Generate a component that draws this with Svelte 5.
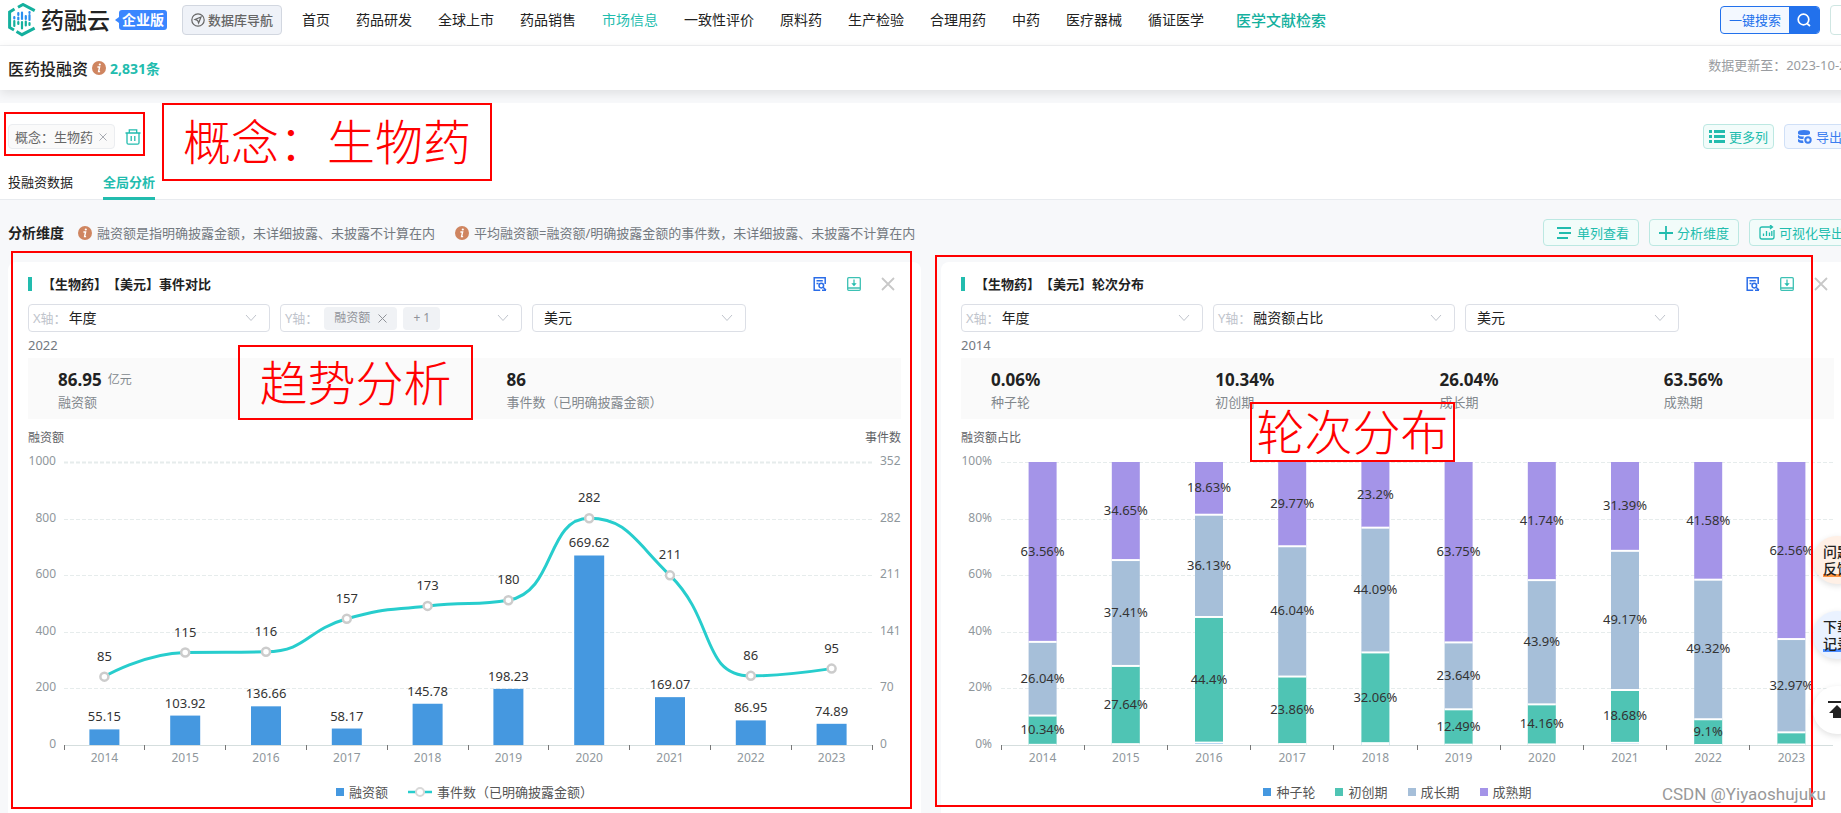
<script lang="ts">
  type Point = { x: number; y: number };

  const NAV = [
    "首页", "药品研发", "全球上市", "药品销售", "市场信息", "一致性评价", "原料药",
    "生产检验", "合理用药", "中药", "医疗器械", "循证医学",
  ];
  const YEARS = [2014, 2015, 2016, 2017, 2018, 2019, 2020, 2021, 2022, 2023];
  const AMOUNTS = [55.15, 103.92, 136.66, 58.17, 145.78, 198.23, 669.62, 169.07, 86.95, 74.89];
  const EVENTS = [85, 115, 116, 157, 173, 180, 282, 211, 86, 95];

  const ROUNDS = [
    { name: "种子轮", color: "#4598e0", values: [0.06, 0.3, 0.84, 0.33, 0.65, 0.12, 0.2, 0.76, 0, 0.17] },
    { name: "初创期", color: "#4fc4b4", values: [10.34, 27.64, 44.4, 23.86, 32.06, 12.49, 14.16, 18.68, 9.1, 4.3] },
    { name: "成长期", color: "#a6bfd9", values: [26.04, 37.41, 36.13, 46.04, 44.09, 23.64, 43.9, 49.17, 49.32, 32.97] },
    { name: "成熟期", color: "#a494e8", values: [63.56, 34.65, 18.63, 29.77, 23.2, 63.75, 41.74, 31.39, 41.58, 62.56] },
  ];

  const TREND_STATS = [
    { value: "86.95", unit: "亿元", label: "融资额" },
    { value: "86", unit: "", label: "事件数（已明确披露金额）" },
  ];
  const ROUND_STATS = [
    { value: "0.06%", unit: "", label: "种子轮" },
    { value: "10.34%", unit: "", label: "初创期" },
    { value: "26.04%", unit: "", label: "成长期" },
    { value: "63.56%", unit: "", label: "成熟期" },
  ];

  // vertical extent shared by both plots
  const TOP = 16;
  const BOTTOM = 299;
  const SPAN = BOTTOM - TOP;

  let trendWidth = $state(873);
  let roundWidth = $state(873);

  const trend = $derived({ left: 36, right: trendWidth - 29, band: (trendWidth - 65) / 10 });
  const round = $derived({ left: 40, right: roundWidth - 1, band: (roundWidth - 41) / 10 });

  const points = $derived(
    EVENTS.map((v, i) => ({ x: trend.left + trend.band * (i + 0.5), y: BOTTOM - (v / 352) * SPAN })),
  );

  const clamp = (v: number, a: number, b: number) =>
    Math.max(Math.min(v, Math.max(a, b)), Math.min(a, b));

  function smoothPath(pts: Point[]) {
    let d = `M${pts[0].x},${pts[0].y}`;
    let c0 = pts[0];
    for (let i = 1; i < pts.length; i++) {
      const prev = pts[i - 1];
      const cur = pts[i];
      const next = pts[i + 1];
      let c1 = cur;
      let nextC0 = cur;
      if (next) {
        const lp = Math.hypot(cur.x - prev.x, cur.y - prev.y);
        const ln = Math.hypot(next.x - cur.x, next.y - cur.y);
        const r = (0.5 * ln) / (ln + lp);
        const nx = clamp(cur.x + (next.x - prev.x) * r, cur.x, next.x);
        const ny = clamp(cur.y + (next.y - prev.y) * r, cur.y, next.y);
        c1 = {
          x: clamp(cur.x - ((nx - cur.x) * lp) / ln, prev.x, cur.x),
          y: clamp(cur.y - ((ny - cur.y) * lp) / ln, prev.y, cur.y),
        };
        nextC0 = {
          x: cur.x + ((cur.x - c1.x) * ln) / lp,
          y: cur.y + ((cur.y - c1.y) * ln) / lp,
        };
      }
      d += `C${c0.x},${c0.y} ${c1.x},${c1.y} ${cur.x},${cur.y}`;
      c0 = nextC0;
    }
    return d;
  }

  function stack(i: number) {
    let base = 0;
    return ROUNDS.map((r, k) => {
      const v = r.values[i];
      const top = k === 3 ? 100 : base + v;
      const seg = {
        name: r.name,
        color: r.color,
        label: v > 5 ? `${v}%` : "",
        y: BOTTOM - (top / 100) * SPAN,
        h: ((top - base) / 100) * SPAN,
      };
      base = top;
      return seg;
    });
  }
</script>

{#snippet info()}
  <svg class="info" width="14" height="14" viewBox="0 0 14 14" aria-hidden="true">
    <circle cx="7" cy="7" r="7" fill="#cf8560" />
    <circle cx="7.8" cy="3.5" r="1.1" fill="#fff" />
    <path d="M5.4 6h2.2l-1 4.6h1.5" fill="none" stroke="#fff" stroke-width="1.4" />
  </svg>
{/snippet}

{#snippet chevron()}
  <svg class="chevron" width="12" height="8" viewBox="0 0 12 8" aria-hidden="true">
    <path d="M1 1l5 5.5L11 1" fill="none" stroke="#c0c4cc" stroke-width="1" />
  </svg>
{/snippet}

{#snippet cardHead(title: string)}
  <header class="card-head">
    <h2>{title}</h2>
    <button aria-label="查看数据">
      <svg width="14" height="14" viewBox="0 0 14 14" fill="none" stroke="#2b6de8" stroke-width="1.5">
        <path d="M12.2 7V.8H1.2v12.4h6M3.5 3.7h6.3M3.5 6.4h2" />
        <circle cx="8.3" cy="8.6" r="2.3" />
        <path d="M10 10.3l3 2.7M9 13.2h4" />
      </svg>
    </button>
    <button aria-label="下载">
      <svg width="14" height="14" viewBox="0 0 14 14" fill="none" stroke="#3cc1b4" stroke-width="1.3">
        <rect x=".7" y=".7" width="12.6" height="12.6" rx="1" />
        <path d="M1 11h12M7 2.5V8" />
        <path d="M4.3 6.2h5.4L7 9.2z" fill="#22bcae" stroke="none" />
      </svg>
    </button>
    <button aria-label="关闭">
      <svg width="14" height="14" viewBox="0 0 14 14" fill="none" stroke="#c8c8c8" stroke-width="1.8">
        <path d="M1 1l12 12M13 1L1 13" />
      </svg>
    </button>
  </header>
{/snippet}

{#snippet stats(items: { value: string; unit: string; label: string }[])}
  <dl class="stats">
    {#each items as s (s.label)}
      <div>
        <dd><strong>{s.value}</strong>{#if s.unit}<small>{s.unit}</small>{/if}</dd>
        <dt>{s.label}</dt>
      </div>
    {/each}
  </dl>
{/snippet}

<div class="page">
  <header class="topbar">
    <a class="brand" href="#home">
      <svg width="28" height="34" viewBox="0 0 28 34" fill="none" aria-hidden="true">
        <path d="M10 4.2l5-2.7 11.7 6.2M6.5 6L1.6 9v15.500L6 27M8.500 28.500l5.500 3.200 12.600-6.500" stroke="#14b09e" stroke-width="3" />
        <path d="M6.300 14v1.500M10.300 10v2M10.300 14.500v2M14 9.500V16M17.800 13v3M21.500 9v1M21.500 12v5" stroke="#2a8ff0" stroke-width="2.200" stroke-linecap="round" />
        <path d="M6.300 18v5M10.300 19v2M14 19v6.500M17.800 18.500v4M21.500 20v2" stroke="#14b09e" stroke-width="2.200" stroke-linecap="round" />
      </svg>
      <span class="brand-name">药融云</span>
      <span class="edition">企业版</span>
    </a>
    <button class="db-nav">
      <svg width="14" height="14" viewBox="0 0 14 14" fill="none" stroke="#666" aria-hidden="true">
        <circle cx="7" cy="7" r="6.2" stroke-width="1.2" />
        <path d="M10 4L4 6.4l2.6 1 1 2.6z" stroke-width="1.2" />
      </svg>
      数据库导航
    </button>
    <nav>
      {#each NAV as item (item)}
        <a href="#nav" class:active={item === "市场信息"}>{item}</a>
      {/each}
    </nav>
    <a class="literature" href="#literature">医学文献检索</a>
    <button class="search">
      <span>一键搜索</span>
      <svg width="30" height="28" viewBox="0 0 30 28" fill="none" stroke="#fff" stroke-width="1.7" aria-hidden="true">
        <circle cx="14.5" cy="13.5" r="5.3" />
        <path d="M18 17.5l3 2.5" />
      </svg>
    </button>
    <button class="account" aria-label="账户"></button>
  </header>

  <div class="titlebar">
    <h1>医药投融资</h1>
    {@render info()}
    <span class="count">2,831条</span>
    <span class="updated">数据更新至：2023-10-26</span>
  </div>

  <section class="filters">
    <div class="filter-row">
      <span class="filter-tag">概念：生物药 <button aria-label="移除">
        <svg width="8" height="8" viewBox="0 0 8 8" stroke="#a8abb2"><path d="M.5.5l7 7M7.5.5l-7 7" /></svg>
      </button></span>
      <button class="clear" aria-label="清空">
        <svg width="16" height="16" viewBox="0 0 16 16" fill="none" stroke="#22bcae" stroke-width="1.3">
          <path d="M.5 4h15M4.3 4V.8h7.4V4M2 4v9.7q0 1.5 1.5 1.5h9q1.5 0 1.5-1.5V4M6.2 7v5M9.8 7v5" />
        </svg>
      </button>
      <button class="action more">
        <svg width="16" height="15" viewBox="0 0 16 15" fill="#22bcae" aria-hidden="true">
          <path d="M0 1h3v3H0zM0 6h3v3H0zM0 11h3v3H0zM5 1h11v3H5zM5 6h11v3H5zM5 11h11v3H5z" />
        </svg>
        更多列
      </button>
      <button class="action export">
        <svg width="15" height="15" viewBox="0 0 15 15" aria-hidden="true">
          <path d="M1 3q0-2 6-2t6 2v1.500q0 1.500-6 1.500T1 4.500zM1 6q2 2 6 1.500-1 2-.5 2.500Q2 10 1 8.500zM1 10q2 1.500 5 1.500l.5 2.500Q2 14 1 12.500z" fill="#3a7df0" />
          <circle cx="11" cy="11" r="2.700" fill="none" stroke="#3a7df0" stroke-width="2" />
        </svg>
        导出
      </button>
    </div>
    <div class="tabs">
      <button>投融资数据</button>
      <button class="active">全局分析</button>
    </div>
  </section>

  <div class="analysis-bar">
    <strong>分析维度</strong>
    <span class="note">{@render info()}融资额是指明确披露金额，未详细披露、未披露不计算在内</span>
    <span class="note">{@render info()}平均融资额=融资额/明确披露金额的事件数，未详细披露、未披露不计算在内</span>
    <div class="actions">
      <button class="action single">
        <svg width="14" height="14" viewBox="0 0 14 14" stroke="#22bcae" stroke-width="1.800" aria-hidden="true">
          <path d="M0 2h14M2 7h12M0 12h11" />
        </svg>
        单列查看
      </button>
      <button class="action">
        <svg width="14" height="14" viewBox="0 0 14 14" stroke="#22bcae" stroke-width="1.800" aria-hidden="true">
          <path d="M0 7h14M7 0v14" />
        </svg>
        分析维度
      </button>
      <button class="action">
        <svg width="16" height="15" viewBox="0 0 16 15" fill="none" stroke="#22bcae" stroke-width="1.300" aria-hidden="true">
          <path d="M9 2H3Q1 2 1 4v8q0 2 2 2h10q2 0 2-2V5M7 2h6M11 0l2.500 2L11 4M4.500 11V8.500M7.500 11V6M10.500 11V7.500M12.800 11V6" />
        </svg>
        可视化导出
      </button>
    </div>
  </div>

  <main>
    <article class="card">
      {@render cardHead("【生物药】【美元】事件对比")}
      <div class="selects">
        <label class="field"><span>X轴：</span><select><option>年度</option></select>{@render chevron()}</label>
        <div class="field">
          <label for="trend-y">Y轴：</label>
          <span class="chip">融资额 <button aria-label="移除融资额">
            <svg width="9" height="9" viewBox="0 0 9 9" stroke="#909399"><path d="M.5.5l8 8M8.500.5l-8 8" /></svg>
          </button></span>
          <span class="chip">+ 1</span>
          <select id="trend-y"><option></option></select>
          {@render chevron()}
        </div>
        <label class="field currency"><select aria-label="币种"><option>美元</option></select>{@render chevron()}</label>
      </div>
      <p class="year">2022</p>
      {@render stats(TREND_STATS)}
      <div class="axis-titles"><span>融资额</span><span>事件数</span></div>
      <div class="chart" bind:clientWidth={trendWidth}>
        <svg width={trendWidth} height="322" role="img" aria-label="事件对比">
          {#each [0, 1, 2, 3, 4, 5] as k (k)}
            {@const y = Math.round(BOTTOM - (SPAN * k) / 5)}
            {#if k > 0}
              <line class="grid" class:strong={k === 5} x1={trend.left} x2={trend.right} y1={y + 0.5} y2={y + 0.5} />
            {/if}
            <text class="tick" x="28" y={y - 2} text-anchor="end">{k * 200}</text>
            <text class="tick" x={trend.right + 8} y={y - 2}>{[0, 70, 141, 211, 282, 352][k]}</text>
          {/each}
          {#each YEARS as year, i (year)}
            {@const h = (AMOUNTS[i] / 1000) * SPAN}
            <rect x={points[i].x - 15} y={BOTTOM - h} width="30" height={h} fill="#4598e0" />
            <text class="tick" x={points[i].x} y="311" text-anchor="middle">{year}</text>
          {/each}
          <line class="axis" x1={trend.left} x2={trend.right} y1={BOTTOM + 0.5} y2={BOTTOM + 0.5} />
          {#each [...YEARS, 2024] as year, i (year)}
            {@const x = Math.floor(trend.left + trend.band * i) + 0.5}
            <line class="mark" x1={x} x2={x} y1={BOTTOM} y2={BOTTOM + 5} />
          {/each}
          <path d={smoothPath(points)} fill="none" stroke="#27cdcd" stroke-width="3" />
          {#each points as p, i (i)}
            <circle cx={p.x} cy={p.y} r="4" fill="#fff" stroke="#ccc" stroke-width="2.500" />
            <text class="value" x={p.x} y={p.y - 21} text-anchor="middle">{EVENTS[i]}</text>
            <text class="value" x={p.x} y={BOTTOM - (AMOUNTS[i] / 1000) * SPAN - 13} text-anchor="middle">{AMOUNTS[i]}</text>
          {/each}
        </svg>
      </div>
      <ul class="legend">
        <li>
          <svg width="8" height="8"><rect width="8" height="8" fill="#4598e0" /></svg>
          融资额
        </li>
        <li>
          <svg width="24" height="12">
            <path d="M0 6h24" stroke="#27cdcd" stroke-width="2.500" />
            <circle cx="12" cy="6" r="4" fill="#fff" stroke="#d8d8d8" stroke-width="2" />
          </svg>
          事件数（已明确披露金额）
        </li>
      </ul>
    </article>

    <article class="card">
      {@render cardHead("【生物药】【美元】轮次分布")}
      <div class="selects">
        <label class="field"><span>X轴：</span><select><option>年度</option></select>{@render chevron()}</label>
        <label class="field"><span>Y轴：</span><select><option>融资额占比</option></select>{@render chevron()}</label>
        <label class="field currency"><select aria-label="币种"><option>美元</option></select>{@render chevron()}</label>
      </div>
      <p class="year">2014</p>
      {@render stats(ROUND_STATS)}
      <div class="axis-titles"><span>融资额占比</span></div>
      <div class="chart" bind:clientWidth={roundWidth}>
        <svg width={roundWidth} height="322" role="img" aria-label="轮次分布">
          {#each [0, 1, 2, 3, 4, 5] as k (k)}
            {@const y = Math.round(BOTTOM - (SPAN * k) / 5)}
            {#if k > 0}
              <line class="grid" x1={round.left} x2={round.right} y1={y + 0.5} y2={y + 0.5} />
            {/if}
            <text class="tick" x="31" y={y - 2} text-anchor="end">{k * 20}%</text>
          {/each}
          {#each YEARS as year, i (year)}
            {@const x = round.left + round.band * (i + 0.5)}
            {#each stack(i) as seg (seg.name)}
              <rect x={x - 14} y={seg.y} width="28" height={seg.h} fill={seg.color} />
              <path d="M{x - 14} {seg.y + seg.h}h28" stroke="#fff" stroke-width="2" />
            {/each}
            {#each stack(i) as seg (seg.name)}
              <text class="value" {x} y={seg.y + seg.h / 2 - 1} text-anchor="middle">{seg.label}</text>
            {/each}
            <text class="tick" {x} y="311" text-anchor="middle">{year}</text>
          {/each}
          <line class="axis" x1={round.left} x2={round.right} y1={BOTTOM + 0.5} y2={BOTTOM + 0.5} />
          {#each YEARS as year, i (year)}
            {@const x = Math.floor(round.left + round.band * i) + 0.5}
            <line class="mark" x1={x} x2={x} y1={BOTTOM} y2={BOTTOM + 5} />
          {/each}
        </svg>
      </div>
      <ul class="legend">
        {#each ROUNDS as r (r.name)}
          <li>
            <svg width="8" height="8"><rect width="8" height="8" fill={r.color} /></svg>
            {r.name}
          </li>
        {/each}
      </ul>
    </article>
  </main>

  <div class="outline tag-box"></div>
  <div class="outline concept-box">概念：生物药</div>
  <div class="outline trend-area"></div>
  <div class="outline trend-box">趋势分析</div>
  <div class="outline round-area"></div>
  <div class="outline round-box">轮次分布</div>

  <aside class="floating">
    <button class="feedback"><span>问题</span><span>反馈</span></button>
    <button class="downloads"><span>下载</span><span>记录</span></button>
    <button class="to-top" aria-label="回到顶部">
      <svg width="20" height="20" viewBox="0 0 20 20" fill="#222"><path d="M1 1h18v2H1zM10 5l8 8h-4v5H6v-5H2z" /></svg>
    </button>
  </aside>
  <span class="watermark">CSDN @Yiyaoshujuku</span>
</div>

<style>
  :global(body) {
    overflow: hidden;
  }

  .page {
    position: relative;
    box-sizing: border-box;
    /* the content runs slightly wider than the window */
    width: calc(100% + 21px);
    height: 100vh;
    overflow: hidden;
    background: #f7f8fa;
    color: #222;
    font-family: "Noto Sans", "Noto Sans CJK SC", sans-serif;
    font-size: 13px;
    line-height: 16px;
    text-spacing-trim: space-all;
  }

  button,
  select {
    padding: 0;
    border: 0;
    background: none;
    color: inherit;
    font: inherit;
  }

  svg {
    display: block;
    flex: none;
  }

  a {
    color: inherit;
    text-decoration: none;
  }

  h1,
  h2,
  p,
  dl,
  dd,
  ul {
    margin: 0;
    padding: 0;
  }

  .topbar {
    display: flex;
    align-items: center;
    box-sizing: border-box;
    height: 46px;
    padding: 0 8px 5px;
    border-bottom: 1px solid #f0f1f3;
    background: #fff;
    font-size: 14px;
    white-space: nowrap;
  }

  .brand {
    display: flex;
    align-items: center;
  }

  .brand-name {
    margin: 0 9px 0 5px;
    font-size: 23px;
    font-weight: 500;
    line-height: 30px;
  }

  .edition {
    position: relative;
    padding: 0 3px;
    border-radius: 3px;
    background: #3a86ff;
    color: #fff;
    font-weight: 700;
    line-height: 20px;
  }

  .edition::before {
    content: "";
    position: absolute;
    top: 7px;
    left: -4px;
    border: 3px solid transparent;
    border-right: 4px solid #3a86ff;
    border-left: 0;
  }

  .db-nav {
    display: flex;
    align-items: center;
    justify-content: center;
    gap: 3px;
    box-sizing: border-box;
    width: 100px;
    height: 30px;
    margin: 0 20px 0 15px;
    border: 1px solid #d2d7e0;
    border-radius: 4px;
    background: #eff2f8;
    color: #666;
    font-size: 13px;
    font-weight: 500;
  }

  nav {
    display: flex;
    gap: 26px;
  }

  nav .active {
    color: #22bcae;
  }

  .literature {
    margin-left: 32px;
    color: #14b09e;
    font-size: 15px;
    font-weight: 500;
  }

  .search {
    display: flex;
    align-items: center;
    box-sizing: border-box;
    height: 28px;
    margin-left: auto;
    overflow: hidden;
    border: 1px solid #2271ec;
    border-radius: 4px;
    background: #f3f8ff;
    color: #2271ec;
    font-size: 13px;
  }

  .search span {
    padding: 0 8px;
  }

  .search svg {
    background: #2271ec;
  }

  .account {
    box-sizing: border-box;
    width: 24px;
    height: 30px;
    margin-left: 10px;
    border: 1px solid #cfe6e2;
    border-radius: 4px;
  }

  .titlebar {
    position: relative;
    display: flex;
    align-items: flex-start;
    box-sizing: border-box;
    height: 44px;
    padding: 11px 8px 0;
    background: #fff;
    box-shadow: 0 3px 10px rgba(0, 0, 0, 0.1);
  }

  .titlebar h1 {
    font-size: 16px;
    font-weight: 500;
    line-height: 24px;
  }

  .titlebar .info {
    margin: 4px 4px 0;
  }

  .count {
    color: #22bcae;
    font-size: 14px;
    font-weight: 700;
    line-height: 24px;
  }

  .updated {
    margin-left: auto;
    color: #999ca0;
  }

  .filters {
    margin-top: 13px;
    padding: 21px 8px 0;
    background: #fff;
    box-shadow: inset 0 -1px #e8ebef;
  }

  .filter-row {
    display: flex;
    align-items: center;
    gap: 10px;
    height: 25px;
  }

  .filter-tag {
    display: flex;
    align-items: center;
    gap: 2px;
    box-sizing: border-box;
    width: 107px;
    height: 25px;
    padding: 0 6px;
    border: 1px solid #ebedf0;
    border-radius: 4px;
    background: #fafafa;
    color: #666;
    white-space: nowrap;
  }

  .filter-tag button {
    padding: 4px;
  }

  .action {
    display: flex;
    align-items: center;
    gap: 4px;
    box-sizing: border-box;
    height: 27px;
    padding: 0 9px;
    border: 1px solid #bce8e2;
    border-radius: 4px;
    background: #f2fcfa;
    color: #22bcae;
    white-space: nowrap;
  }

  .filter-row .action {
    height: 25px;
  }

  .more {
    margin-left: auto;
    padding: 0 5px;
  }

  .export {
    width: 70px;
    padding: 0 12px;
    border-color: #d0e0f7;
    background: #f2f7ff;
    color: #3a7df0;
  }

  .single {
    padding: 0 9px 0 13px;
    gap: 6px;
  }

  .tabs {
    display: flex;
    gap: 30px;
    margin-top: 18px;
  }

  .tabs button {
    border-bottom: 3px solid transparent;
    line-height: 30px;
  }

  .tabs .active {
    border-color: #22bcae;
    color: #22bcae;
    font-weight: 700;
  }

  .analysis-bar {
    display: flex;
    align-items: center;
    padding: 19px 8px 16px;
    white-space: nowrap;
  }

  .analysis-bar strong {
    margin-right: 14px;
    font-size: 14px;
  }

  .note {
    display: flex;
    align-items: center;
    gap: 5px;
    margin-right: 20px;
    color: #73797f;
  }

  .actions {
    display: flex;
    gap: 10px;
    margin-left: auto;
  }

  main {
    display: grid;
    grid-template-columns: 1fr 1fr;
    gap: 20px;
    padding: 0 8px;
  }

  .card {
    min-width: 0;
    padding: 14px 20px 24px;
    border-radius: 8px;
    background: #fff;
  }

  .card-head {
    display: flex;
    align-items: center;
    height: 16px;
  }

  .card-head h2 {
    margin-right: auto;
    padding-left: 10px;
    border-left: 4px solid #22bcae;
    font-size: 13px;
    font-weight: 700;
    line-height: 14px;
  }

  .card-head button {
    margin-left: 20px;
  }

  .card-head button:last-child {
    margin-right: 6px;
  }

  .selects {
    display: flex;
    gap: 10px;
    margin-top: 12px;
  }

  .field {
    display: flex;
    align-items: center;
    gap: 6px;
    box-sizing: border-box;
    width: 242px;
    height: 28px;
    padding: 0 12px 0 4px;
    border: 1px solid #dcdfe6;
    border-radius: 4px;
    color: #c0c4cc;
    white-space: nowrap;
  }

  .field select {
    flex: 1;
    min-width: 0;
    margin-left: -4px;
    appearance: none;
    color: #222;
    font-size: 14px;
  }

  .currency {
    width: 214px;
    padding-left: 15px;
  }

  .chip {
    display: flex;
    align-items: center;
    gap: 8px;
    height: 23px;
    padding: 0 10px;
    border-radius: 4px;
    background: #f0f2f5;
    color: #909399;
    font-size: 12px;
  }

  .year {
    margin-top: 5px;
    color: #73797f;
    line-height: 17px;
  }

  .stats {
    display: grid;
    grid-auto-flow: column;
    grid-auto-columns: 1fr;
    gap: 54px;
    margin-top: 4px;
    padding: 12px 0 7px 30px;
    background: #fafafa;
    color: #82888d;
    line-height: 20px;
    white-space: nowrap;
  }

  .stats > div {
    display: flex;
    flex-direction: column;
    gap: 2px;
    min-width: 0;
  }

  .stats dd {
    display: flex;
    gap: 6px;
    height: 20px;
  }

  .stats strong {
    color: #222;
    font-size: 17px;
  }

  .stats small {
    font-size: 12px;
  }

  .axis-titles {
    display: flex;
    justify-content: space-between;
    margin-top: 11px;
    color: #606266;
    font-size: 12px;
  }

  .chart {
    overflow: hidden;
  }

  .chart text {
    dominant-baseline: central;
  }

  .tick {
    fill: #8f979c;
    font-size: 12px;
  }

  .value {
    fill: #333;
    font-size: 13px;
  }

  .grid {
    stroke: #e6ecec;
    stroke-dasharray: 4 2;
  }

  .grid.strong {
    stroke-width: 2;
  }

  .axis {
    stroke: #d5dede;
  }

  .mark {
    stroke: #777;
  }

  .legend {
    display: flex;
    justify-content: center;
    gap: 20px;
    margin-top: 16px;
    color: #555;
    list-style: none;
  }

  .legend li {
    display: flex;
    align-items: center;
    gap: 5px;
  }

  .outline {
    position: absolute;
    display: flex;
    align-items: center;
    justify-content: center;
    box-sizing: border-box;
    border: 2px solid #f00;
    color: #f00;
    font-size: 48px;
    font-weight: 300;
    line-height: 48px;
    white-space: nowrap;
    pointer-events: none;
  }

  .tag-box {
    top: 112px;
    left: 4px;
    width: 141px;
    height: 44px;
  }

  .concept-box {
    top: 103px;
    left: 162px;
    width: 330px;
    height: 78px;
  }

  .trend-area {
    top: 251px;
    left: 11px;
    width: 901px;
    height: 558px;
  }

  .trend-box {
    top: 345px;
    left: 238px;
    width: 235px;
    height: 75px;
  }

  .round-area {
    top: 255px;
    left: 935px;
    width: 878px;
    height: 552px;
  }

  .round-box {
    top: 402px;
    left: 1250px;
    width: 205px;
    height: 60px;
  }

  .floating {
    position: absolute;
    top: 536px;
    right: 1px;
    display: flex;
    flex-direction: column;
    gap: 27px;
  }

  .floating button {
    display: flex;
    flex-direction: column;
    align-items: center;
    justify-content: center;
    width: 48px;
    height: 48px;
    border-radius: 50%;
    box-shadow: 0 2px 6px rgba(0, 0, 0, 0.12);
    font-size: 14px;
    font-weight: 500;
    line-height: 17px;
  }

  .floating .feedback {
    background: #fff0e6;
  }

  .floating .downloads {
    background: #eaf2ff;
  }

  .floating .to-top {
    background: #fff;
  }

  .feedback span:last-child {
    box-shadow: inset 0 -3px #ff9440;
  }

  .downloads span:last-child {
    box-shadow: inset 0 -3px #4a8cff;
  }

  .watermark {
    position: absolute;
    right: 36px;
    bottom: 8px;
    color: #999;
    font-family: Roboto, sans-serif;
    font-size: 17px;
    line-height: 22px;
    text-shadow: 0 0 1px #fff;
  }
</style>
